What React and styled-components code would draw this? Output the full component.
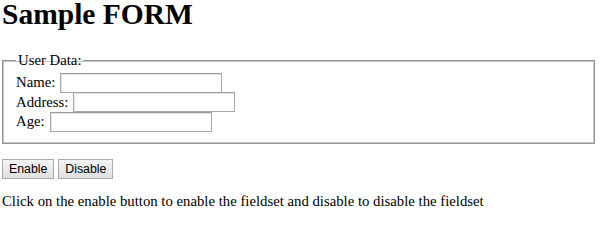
import React from 'react';
import styled, { createGlobalStyle } from 'styled-components';

const GlobalStyle = createGlobalStyle`
  html, body {
    margin: 0;
    padding: 0;
    background: #ffffff;
  }
  body {
    font-family: "Liberation Serif", "Times New Roman", serif;
    font-size: 14.75px;
    color: #000000;
  }
`
const Page = styled.div`
  padding: 0 5px 0 2px;
`
const Title = styled.h1`
  font-size: 29.5px;
  font-weight: bold;
  line-height: 28px;
  margin: 0 0 24px;
`
const Fieldset = styled.fieldset`
  margin: 0;
  padding: 4px 13px 11px;
  border: 1px solid #969696;
  box-shadow: inset 1px 1px 0 #c4c4c4, inset -1px -1px 0 #c4c4c4;
  outline: none;
`
const Legend = styled.legend`
  padding: 0 2px;
  line-height: 17px;
`
const Row = styled.div`
  display: flex;
  align-items: center;
  gap: 5px;
  height: 19.5px;
`
const Label = styled.span`
  line-height: 17px;
`
const TextInput = styled.input`
  box-sizing: border-box;
  width: 162px;
  height: 20px;
  margin: 0;
  padding: 1px 2px;
  border: 1px solid #a9a9a9;
  border-top-color: #9a9a9a;
  box-shadow: inset 1px 1px 0 #e6e6e6;
  font-family: "Liberation Sans", Arial, sans-serif;
  font-size: 12.3px;
  background: #ffffff;
`
const ButtonRow = styled.div`
  display: flex;
  gap: 4px;
  margin-top: 15px;
`
const Button = styled.button`
  box-sizing: border-box;
  height: 20px;
  padding: 0 6px;
  margin: 0;
  font-family: "Liberation Sans", Arial, sans-serif;
  font-size: 12.3px;
  color: #000000;
  background: linear-gradient(#f4f4f4, #e0e0e0);
  border: 1px solid #acacac;
  border-radius: 0;
`
const Text = styled.p`
  margin: 14px 0 0;
  line-height: 17px;
`

const fields = ['Name', 'Address', 'Age'];

function App() {
  return (
    <>
      <GlobalStyle />
      <Page>
        <Title>Sample FORM</Title>
        <Fieldset>
          <Legend>User Data:</Legend>
          {fields.map((f) => (
            <Row key={f}>
              <Label>{f}:</Label>
              <TextInput type="text" />
            </Row>
          ))}
        </Fieldset>
        <ButtonRow>
          <Button>Enable</Button>
          <Button>Disable</Button>
        </ButtonRow>
        <Text>Click on the enable button to enable the fieldset and disable to disable the fieldset</Text>
      </Page>
    </>
  );
}

export default App
